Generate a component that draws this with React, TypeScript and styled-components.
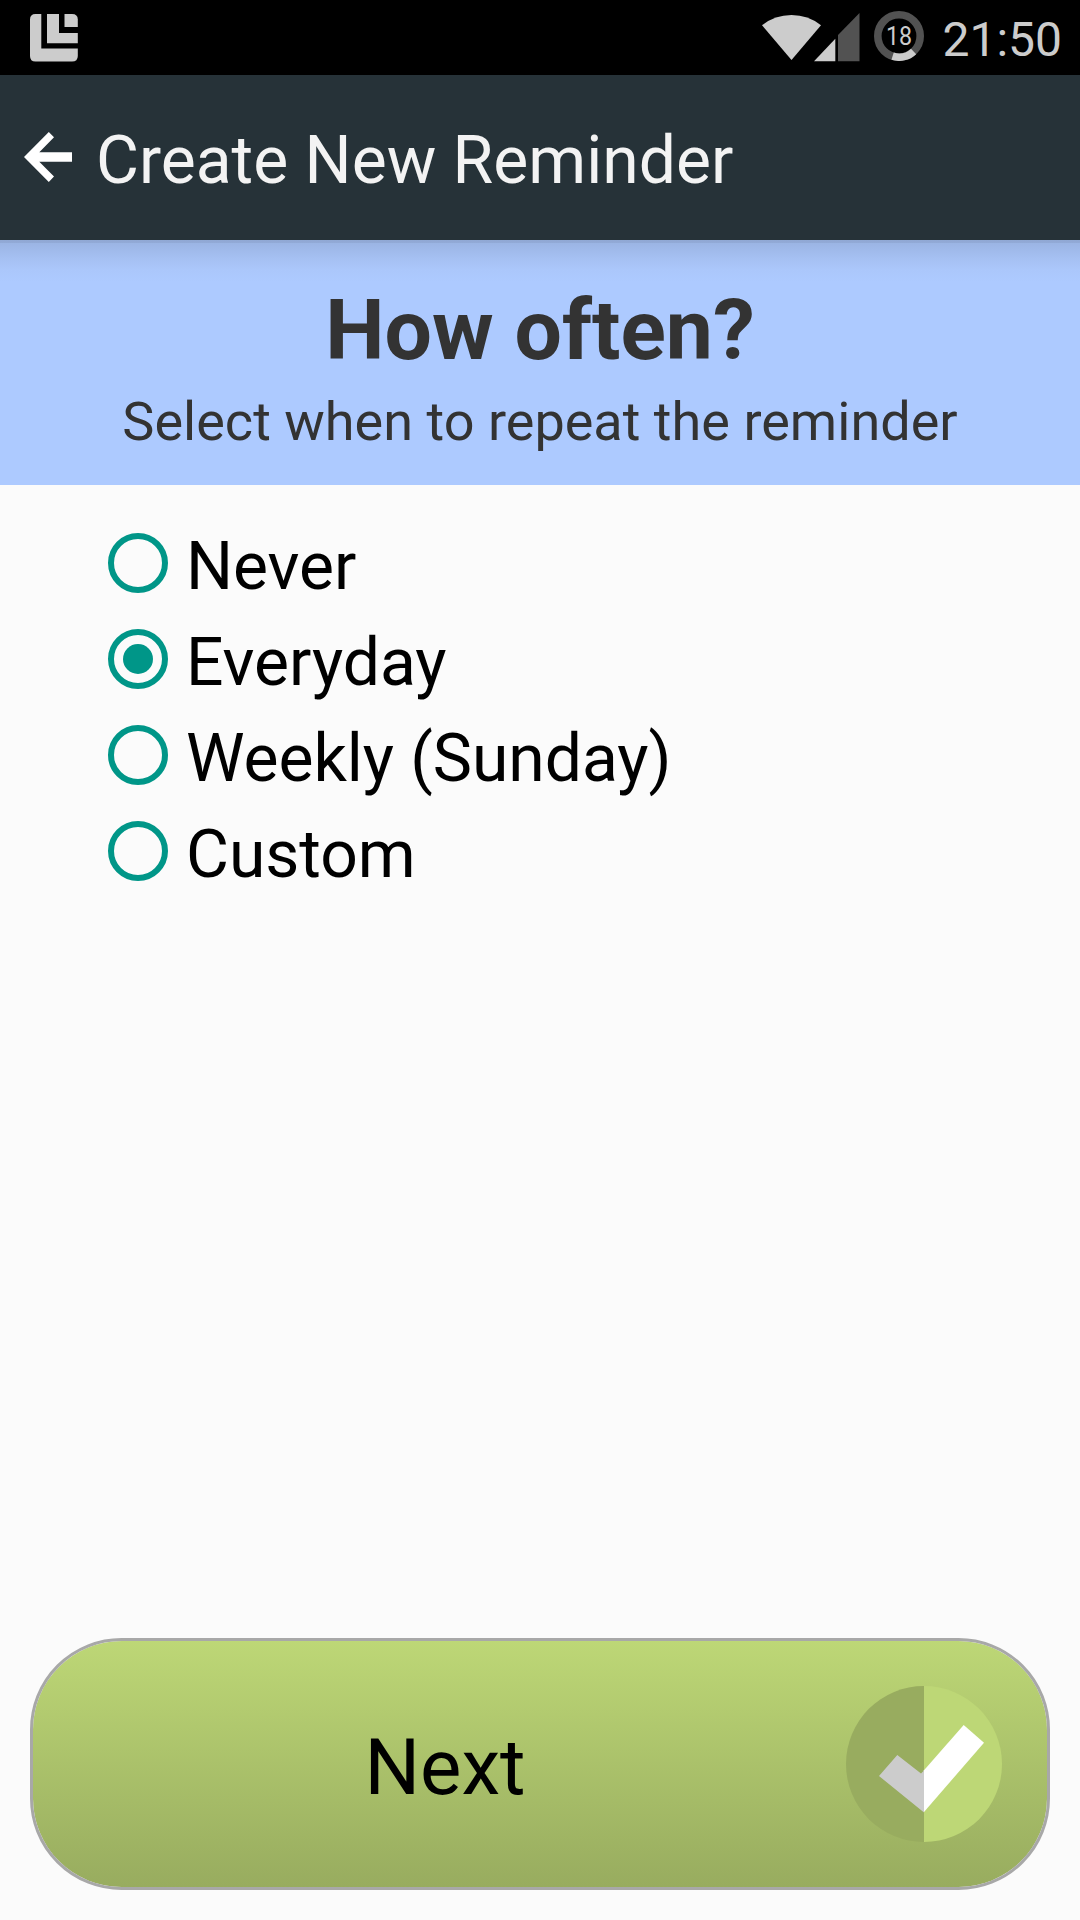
import React, { useState } from "react";
import styled, { createGlobalStyle } from "styled-components";

const GlobalStyle = createGlobalStyle`
  html, body { margin: 0; padding: 0; background: #fbfbfb; }
  *, *::before, *::after { box-sizing: border-box; }
`;

const Screen = styled.div`
  width: 1080px;
  height: 1920px;
  display: flex;
  flex-direction: column;
  overflow: hidden;
  background: #fbfbfb;
  color: #000;
  font-family: Roboto, sans-serif;
`;

const StatusBar = styled.header`
  height: 75px;
  display: flex;
  align-items: flex-start;
  justify-content: space-between;
  padding: 0 18px 0 30px;
  background: #000;
  svg { display: block; }
`;

const AppIcon = styled.svg`
  margin-top: 13.5px;
`;

const StatusGroup = styled.div`
  display: flex;
  align-items: flex-start;
`;

const Battery = styled.div`
  width: 50px;
  height: 50px;
  margin: 10.7px 18.3px 0 14.2px;
  display: grid;
  place-items: center;
  > * { grid-area: 1 / 1; }
`;

const BatteryLevel = styled.span`
  font-size: 25px;
  line-height: 30px;
  color: #ccc;
  transform: translateY(0.5px) scaleX(0.93);
`;

const Clock = styled.time`
  margin-top: 11px;
  font-size: 48px;
  line-height: 57px;
  color: #ccc;
`;

const AppBar = styled.nav`
  height: 165px;
  display: flex;
  align-items: center;
  padding-left: 24px;
  background: #263238;
`;

const BackButton = styled.button`
  display: flex;
  width: 48px;
  height: 50px;
  margin: 0 24px 1px 0;
  padding: 0;
  border: 0;
  background: none;
  cursor: pointer;
`;

const AppTitle = styled.h1`
  margin: 0;
  padding-top: 6px;
  font-size: 66px;
  line-height: 78px;
  font-weight: 400;
  color: #f3f3f3;
`;

const Prompt = styled.section`
  height: 245px;
  display: flex;
  flex-direction: column;
  align-items: center;
  gap: 10px;
  padding-top: 42px;
  color: #333;
  background:
    linear-gradient(rgba(0, 0, 0, 0.06) 0 3px, transparent 3px),
    linear-gradient(#99b2e1 0, #a5c0f2 18px, #abc7fb 30px, #adcaff 42px);
`;

const Question = styled.h2`
  margin: 0;
  font-size: 84px;
  line-height: 98px;
  font-weight: 700;
`;

const Hint = styled.p`
  margin: 0;
  font-size: 54px;
  line-height: 64px;
  letter-spacing: 0.02px;
`;

const Options = styled.div`
  flex: 1;
  display: flex;
  flex-direction: column;
  align-items: flex-start;
  padding: 30px 0 0 108px;
`;

const Option = styled.button`
  height: 96px;
  display: flex;
  align-items: center;
  gap: 18px;
  padding: 0;
  border: 0;
  background: none;
  color: #000;
  font: inherit;
  cursor: pointer;
`;

const RadioMark = styled.span<{ $checked: boolean }>`
  width: 60px;
  height: 60px;
  display: grid;
  place-items: center;
  border: 6px solid #009688;
  border-radius: 50%;
  &::after {
    content: "";
    width: 30px;
    height: 30px;
    border-radius: 50%;
    background: ${(p) => (p.$checked ? "#009688" : "transparent")};
  }
`;

const OptionLabel = styled.span`
  padding-top: 7px;
  font-size: 66px;
  line-height: 78px;
  letter-spacing: -0.05px;
`;

const Footer = styled.footer`
  padding: 0 30px 30px;
`;

const NextButton = styled.button`
  width: 100%;
  height: 252px;
  display: flex;
  align-items: center;
  padding: 0 45px 0 0;
  border: 3px solid #a8a8a8;
  border-radius: 91.5px;
  background: linear-gradient(#bdd776, #98ac5f) padding-box;
  color: #000;
  font: inherit;
  cursor: pointer;
`;

const NextLabel = styled.span`
  flex: 1;
  padding: 8px 0 0 11px;
  font-size: 78px;
  line-height: 92px;
  text-align: center;
`;

const REPEAT_OPTIONS = ["Never", "Everyday", "Weekly (Sunday)", "Custom"];

export default function App() {
  const [selected, setSelected] = useState("Everyday");

  return (
    <Screen>
      <GlobalStyle />
      <StatusBar>
        <AppIcon width="48" height="48" viewBox="0 0 48 48" fill="#ccc">
          <path d="M5.5 0H11.3V34.6H47.8V42Q47.8 47.6 42 47.6H5.5Q0 47.6 0 42V5.5Q0 0 5.5 0Z" />
          <path d="M17 0H29V19H47.8V29.2H17Z" />
          <path d="M34.5 0H42Q47.8 0 47.8 5.5V13H34.5Z" />
        </AppIcon>
        <StatusGroup>
          <svg width="98" height="75" viewBox="762 0 98 75">
            <path d="M791.5 60L762 25.2Q775 15 791.5 15T821 25.2Z" fill="#ccc" />
            <path d="M814 61.3L835.3 38.7V61.3Z" fill="#ccc" />
            <path d="M838 61.3V35L859.5 13V61.3Z" fill="#525252" />
          </svg>
          <Battery>
            <svg width="50" height="50" viewBox="0 0 50 50" fill="none" strokeWidth="7.6">
              <circle cx="25" cy="25" r="21.2" stroke="#525252" />
              <path d="M18.6 45.2A21.2 21.2 0 0 0 39.6 40.4" stroke="#ccc" />
            </svg>
            <BatteryLevel>18</BatteryLevel>
          </Battery>
          <Clock>21:50</Clock>
        </StatusGroup>
      </StatusBar>

      <AppBar>
        <BackButton aria-label="Back">
          <svg width="48" height="50" viewBox="0 0 48 50" fill="#fff">
            <path d="M0 25L24.8 0L30 5.3L15.3 20.2H48V29.8H15.3L30 44.5L24.8 50Z" />
          </svg>
        </BackButton>
        <AppTitle>Create New Reminder</AppTitle>
      </AppBar>

      <Prompt>
        <Question>How often?</Question>
        <Hint>Select when to repeat the reminder</Hint>
      </Prompt>

      <Options role="radiogroup">
        {REPEAT_OPTIONS.map((name) => (
          <Option
            key={name}
            role="radio"
            aria-checked={selected === name}
            onClick={() => setSelected(name)}
          >
            <RadioMark $checked={selected === name} />
            <OptionLabel>{name}</OptionLabel>
          </Option>
        ))}
      </Options>

      <Footer>
        <NextButton>
          <NextLabel>Next</NextLabel>
          <svg width="156" height="156" viewBox="0 0 156 156">
            <path d="M78 0A78 78 0 0 0 78 156Z" fill="#98ac5f" />
            <path d="M78 0A78 78 0 0 1 78 156Z" fill="#bdd776" />
            <path d="M51.3 69L75 87.5L78 84.5V126.5L33 90Z" fill="#ccc" />
            <path d="M78 84.3L117.7 39L138 56.7L78 126Z" fill="#fff" />
          </svg>
        </NextButton>
      </Footer>
    </Screen>
  );
}
